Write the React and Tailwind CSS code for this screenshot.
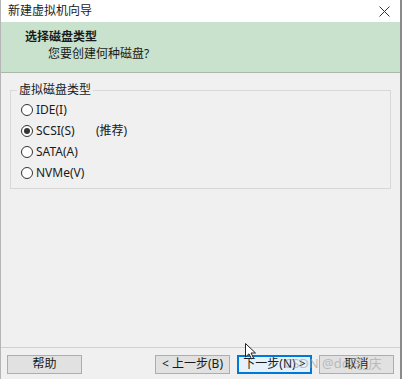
export default function App() {
  const options = [
    { id: "ide", label: "IDE(I)" },
    { id: "scsi", label: "SCSI(S)", note: "(推荐)", checked: true },
    { id: "sata", label: "SATA(A)" },
    { id: "nvme", label: "NVMe(V)" },
  ];

  return (
    <div
      className="relative w-[402px] h-[379px] flex flex-col bg-[#f0f0f0] border-l border-l-[#b5b5b5] border-r-2 border-r-[#8a8a8a] text-[12px] text-[#1a1a1a] overflow-hidden"
      style={{ fontFamily: '"Noto Sans", "Noto Sans CJK SC", sans-serif' }}
    >
      {/* Title bar */}
      <div className="h-[22px] bg-white flex items-center justify-between pl-[7px] pr-[10px]">
        <span className="leading-none">新建虚拟机向导</span>
        <svg width="11" height="11" viewBox="0 0 11 11" className="text-[#333]">
          <path d="M0.5 0.5L10.5 10.5M10.5 0.5L0.5 10.5" stroke="currentColor" strokeWidth="1" />
        </svg>
      </div>

      {/* Header */}
      <div className="h-[51px] bg-[#c8e2cd] border-b border-[#a8b8aa] pl-[24px] pt-[8px]">
        <div className="font-bold leading-[14px]">选择磁盘类型</div>
        <div className="pl-[23px] mt-[3px] leading-[14px]">您要创建何种磁盘?</div>
      </div>

      {/* Body */}
      <div className="flex-1 px-[9px] pt-[17px]">
        <div className="relative border border-[#d8d8d8] h-[99px] pt-[12px] pl-[10px]">
          <span className="absolute -top-[9px] left-[6px] bg-[#f0f0f0] px-[2px] leading-[16px]">
            虚拟磁盘类型
          </span>
          <div className="flex flex-col gap-[7px]">
            {options.map((o) => (
              <div key={o.id} className="flex items-center h-[14px]">
                <span className="w-[12px] h-[12px] rounded-full border border-[#333] bg-white flex items-center justify-center">
                  {o.checked && <span className="w-[6px] h-[6px] rounded-full bg-[#333]" />}
                </span>
                <span className="ml-[3px] w-[60px]">{o.label}</span>
                {o.note && <span>{o.note}</span>}
              </div>
            ))}
          </div>
        </div>
      </div>

      {/* Footer */}
      <div className="h-[32px] border-t border-[#d0d0d0] flex items-center px-[6px] pt-[1px]">
        <button className="w-[75px] h-[19px] bg-[#e1e1e1] border border-[#adadad] leading-none">帮助</button>
        <div className="flex-1" />
        <div className="flex gap-[7px]">
          <button className="w-[75px] h-[19px] bg-[#e1e1e1] border border-[#adadad] leading-none">
            &lt; 上一步(B)
          </button>
          <button className="w-[75px] h-[19px] bg-[#e5f1fb] border-2 border-[#0078d7] leading-none">
            下一步(N) &gt;
          </button>
          <button className="w-[75px] h-[19px] bg-[#e1e1e1] border border-[#adadad] leading-none">取消</button>
        </div>
      </div>

      {/* Watermark */}
      <span className="absolute left-[283px] top-[357px] text-[13px] text-[#a0a0a0] opacity-60 leading-none pointer-events-none">
        CSDN @dd同_庆
      </span>

      {/* Cursor */}
      <svg width="11" height="17" viewBox="0 0 11 17" className="absolute left-[244px] top-[343px]">
        <path d="M0.5 0.5V14L4 10.8L6.5 16L8.5 15L6 10H10.5Z" fill="white" stroke="#222" strokeWidth="1" />
      </svg>
    </div>
  );
}
